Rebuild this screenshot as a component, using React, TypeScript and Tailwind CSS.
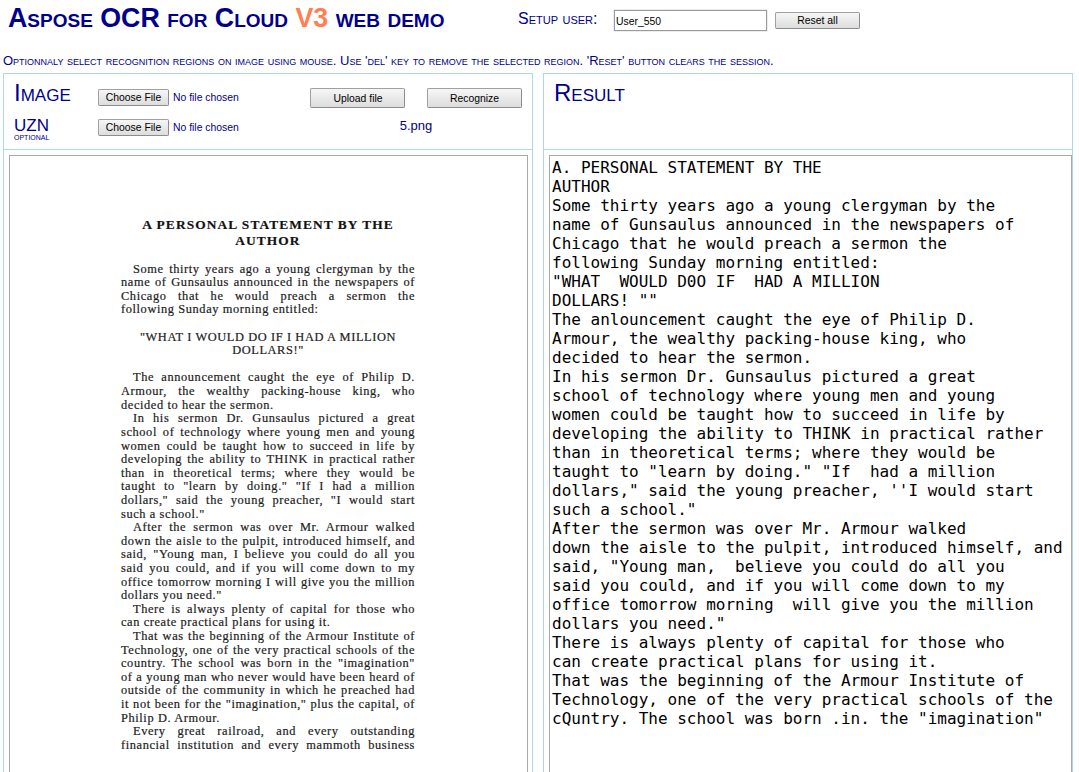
import type { ReactNode } from 'react';

type Kind = 'full' | 'indent' | 'last' | 'center' | 'gap';

const pageLines: [Kind, string][] = [
  ['indent', 'Some thirty years ago a young clergyman by the'],
  ['full', 'name of Gunsaulus announced in the newspapers of'],
  ['full', 'Chicago that he would preach a sermon the'],
  ['last', 'following Sunday morning entitled:'],
  ['gap', ''],
  ['center', '"WHAT I WOULD DO IF I HAD A MILLION'],
  ['center', 'DOLLARS!"'],
  ['gap', ''],
  ['indent', 'The announcement caught the eye of Philip D.'],
  ['full', 'Armour, the wealthy packing-house king, who'],
  ['last', 'decided to hear the sermon.'],
  ['indent', 'In his sermon Dr. Gunsaulus pictured a great'],
  ['full', 'school of technology where young men and young'],
  ['full', 'women could be taught how to succeed in life by'],
  ['full', 'developing the ability to THINK in practical rather'],
  ['full', 'than in theoretical terms; where they would be'],
  ['full', 'taught to "learn by doing." "If I had a million'],
  ['full', 'dollars," said the young preacher, "I would start'],
  ['last', 'such a school."'],
  ['indent', 'After the sermon was over Mr. Armour walked'],
  ['full', 'down the aisle to the pulpit, introduced himself, and'],
  ['full', 'said, "Young man, I believe you could do all you'],
  ['full', 'said you could, and if you will come down to my'],
  ['full', 'office tomorrow morning I will give you the million'],
  ['last', 'dollars you need."'],
  ['indent', 'There is always plenty of capital for those who'],
  ['last', 'can create practical plans for using it.'],
  ['indent', 'That was the beginning of the Armour Institute of'],
  ['full', 'Technology, one of the very practical schools of the'],
  ['full', 'country. The school was born in the "imagination"'],
  ['full', 'of a young man who never would have been heard of'],
  ['full', 'outside of the community in which he preached had'],
  ['full', 'it not been for the "imagination," plus the capital, of'],
  ['last', 'Philip D. Armour.'],
  ['indent', 'Every great railroad, and every outstanding'],
  ['full', 'financial institution and every mammoth business'],
];

const lineStyles: Record<Kind, string> = {
  full: '[text-align-last:justify]',
  indent: 'pl-[12px] [text-align-last:justify]',
  last: '',
  center: 'text-center',
  gap: '',
};

const resultText = `A. PERSONAL STATEMENT BY THE
AUTHOR
Some thirty years ago a young clergyman by the
name of Gunsaulus announced in the newspapers of
Chicago that he would preach a sermon the
following Sunday morning entitled:
"WHAT  WOULD D0O IF  HAD A MILLION
DOLLARS! ""
The anlouncement caught the eye of Philip D.
Armour, the wealthy packing-house king, who
decided to hear the sermon.
In his sermon Dr. Gunsaulus pictured a great
school of technology where young men and young
women could be taught how to succeed in life by
developing the ability to THINK in practical rather
than in theoretical terms; where they would be
taught to "learn by doing." "If  had a million
dollars," said the young preacher, ''I would start
such a school."
After the sermon was over Mr. Armour walked
down the aisle to the pulpit, introduced himself, and
said, "Young man,  believe you could do all you
said you could, and if you will come down to my
office tomorrow morning  will give you the million
dollars you need."
There is always plenty of capital for those who
can create practical plans for using it.
That was the beginning of the Armour Institute of
Technology, one of the very practical schools of the
cQuntry. The school was born .in. the "imagination"`;

function Button({ className, children }: { className: string; children: ReactNode }) {
  return (
    <button
      className={`shrink-0 rounded-[2px] border border-[#a0a0a0] border-b-[#8c8c8c] border-r-[#8c8c8c] bg-linear-to-b from-[#f6f6f6] to-[#dddddd] text-center text-[10.4px] text-black ${className}`}
    >
      {children}
    </button>
  );
}

function FilePicker() {
  return (
    <div className="flex items-center gap-[4px]">
      <Button className="h-[17px] w-[71px] leading-[15px]">Choose File</Button>
      <span className="text-[10.4px] leading-[17px]">No file chosen</span>
    </div>
  );
}

export default function App() {
  return (
    <div className="flex h-[772px] w-[1079px] flex-col overflow-hidden bg-white pl-[3px] font-['Liberation_Sans',Arial,sans-serif] text-[#00008b]">
      <header className="flex h-[53px] shrink-0 items-start">
        <h1 className="w-[515px] whitespace-nowrap pl-[5px] pt-[3px] text-[26.8px] leading-[30px] font-bold [font-variant:small-caps]">
          Aspose OCR for Cloud <span className="text-[#ff7f50]">V3</span> web demo
        </h1>
        <label className="w-[96px] whitespace-nowrap pt-[10px] text-[16px] leading-[18px] [font-variant:small-caps]">
          Setup user:
        </label>
        <input
          className="mt-[10px] h-[21px] w-[153px] border border-[#9a9a9a] bg-white pl-px pt-[2px] text-[10.4px] text-black shadow-[0_0_0_0.5px_#dcdcdc] outline-none"
          defaultValue="User_550"
        />
        <Button className="ml-[8px] mt-[12px] h-[17px] w-[85px] leading-[15px]">Reset all</Button>
      </header>
      <p className="h-[20px] shrink-0 whitespace-nowrap text-[13px] leading-[15px] [font-variant:small-caps]">
        Optionnaly select recognition regions on image using mouse. Use 'del' key to remove the selected region. 'Reset'
        button clears the session.
      </p>
      <main className="flex min-h-0 grow gap-[10px]">
        <section className="flex w-[530px] shrink-0 flex-col border-x border-t border-[#add8e6]">
          <div className="flex h-[76px] shrink-0 border-b border-[#add8e6]">
            <div className="w-[94px] pl-[10px] pt-[6px]">
              <h2 className="text-[24px] leading-[26px] [font-variant:small-caps]">Image</h2>
              <h3 className="mt-[11px] text-[17px] leading-[18px] [font-variant:small-caps]">UZN</h3>
              <p className="text-[10px] leading-[4px] [font-variant:small-caps]">optional</p>
            </div>
            <div className="flex w-[212px] flex-col gap-[13px] pt-[15px]">
              <FilePicker />
              <FilePicker />
            </div>
            <div className="pt-[14px]">
              <div className="flex gap-[22px]">
                <Button className="h-[20px] w-[95px] pt-px pl-px leading-[18px]">Upload file</Button>
                <Button className="h-[20px] w-[95px] pt-px leading-[18px]">Recognize</Button>
              </div>
              <p className="mt-[10px] text-center text-[13px] leading-[16px]">5.png</p>
            </div>
          </div>
          <div className="ml-[5px] mr-[4px] mt-[5px] grow border-x border-t border-[#a9a9a9]">
            <article className="ml-[111px] mt-[61px] w-[294px] font-['Liberation_Serif',serif] text-[12.4px] leading-[13.61px] tracking-[0.6px] whitespace-nowrap text-[#1c1c1c] [-webkit-text-stroke:0.2px_#1c1c1c]">
              <h4 className="mb-[14.6px] text-center text-[13.4px] leading-[15.5px] font-bold tracking-[1.08px] text-[#111111]">
                A PERSONAL STATEMENT BY THE
                <br />
                AUTHOR
              </h4>
              {pageLines.map(([kind, text], i) => (
                <p key={i} className={`h-[13.61px] ${lineStyles[kind]}`}>
                  {text}
                </p>
              ))}
            </article>
          </div>
        </section>
        <section className="flex w-[530px] shrink-0 flex-col border-x border-t border-[#add8e6]">
          <div className="h-[76px] shrink-0 border-b border-[#add8e6] pl-[10px] pt-[6px]">
            <h2 className="text-[24px] leading-[26px] [font-variant:small-caps]">Result</h2>
          </div>
          <pre className="ml-[5px] mt-[5px] grow border-x border-t border-[#a9a9a9] pl-[2px] pt-[2px] font-['DejaVu_Sans_Mono',monospace] text-[16px] leading-[19px] text-black">
            {resultText}
          </pre>
        </section>
      </main>
    </div>
  );
}
